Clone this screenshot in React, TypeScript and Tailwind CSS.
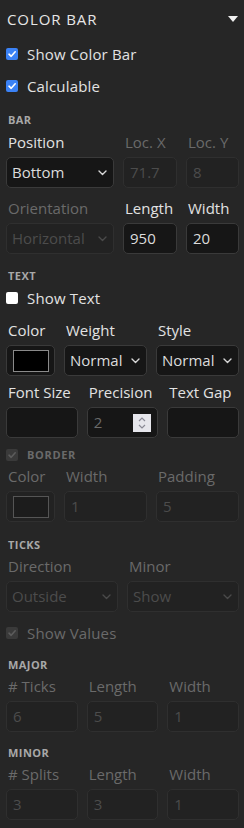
import React from 'react';

const font = { fontFamily: '"Open Sans", "Noto Sans", sans-serif' };

function Check({ state }: { state: 'on' | 'off' | 'disabled' }) {
  if (state === 'off') {
    return <span className="ml-[6px] mr-[9px] inline-block h-[12px] w-[12px] shrink-0 rounded-[2px] bg-white" />;
  }
  const on = state === 'on';
  return (
    <span
      className={`ml-[6px] mr-[9px] flex h-[12px] w-[12px] shrink-0 items-center justify-center rounded-[2px] ${on ? 'bg-[#3b82f6]' : 'bg-[#3a3a3a]'}`}
    >
      <svg width="10" height="10" viewBox="0 0 10 10">
        <path d="M2 5.2 L4.2 7.3 L8.2 2.8" fill="none" stroke={on ? '#ffffff' : '#5c5c5c'} strokeWidth="1.6" strokeLinecap="round" strokeLinejoin="round" />
      </svg>
    </span>
  );
}

function CheckRow({ label, state, h = 'h-[32px]', extra = '' }: { label: string; state: 'on' | 'off' | 'disabled'; h?: string; extra?: string }) {
  return (
    <div className={`flex items-center ${h} ${extra}`}>
      <Check state={state} />
      <span className={`text-[15px] tracking-[0.01em] ${state === 'disabled' ? 'text-[#6a6a6a]' : 'text-[#e2e2e2]'}`}>{label}</span>
    </div>
  );
}

function Section({ label, extra = '' }: { label: string; extra?: string }) {
  return (
    <div className={`flex h-[20px] items-center pl-[8px] text-[11px] font-bold tracking-[0.04em] text-[#a8a8a8] ${extra}`}>{label}</div>
  );
}

function Chevron({ dim }: { dim?: boolean }) {
  return (
    <svg width="9" height="6" viewBox="0 0 9 6" className="shrink-0">
      <path d="M1 1 L4.5 4.5 L8 1" fill="none" stroke={dim ? '#4a4a4a' : '#d8d8d8'} strokeWidth="1.4" strokeLinecap="round" strokeLinejoin="round" />
    </svg>
  );
}

type FieldProps = {
  label: string;
  dim?: boolean;
  kind: 'input' | 'select' | 'color' | 'spin';
  value?: string;
  swatch?: string;
};

function Field({ label, dim, kind, value = '', swatch }: FieldProps) {
  const box = dim
    ? 'bg-[#222222] border-[#2f2f2f] text-[#4c4c4c]'
    : 'bg-[#161616] border-[#3a3a3a] text-[#dcdcdc]';
  return (
    <div className="flex min-w-0 flex-col">
      <div className={`h-[22px] whitespace-nowrap pl-[2px] text-[15px] leading-[22px] ${dim ? 'text-[#6a6a6a]' : 'text-[#e2e2e2]'}`}>{label}</div>
      <div className={`mt-[4px] flex h-[31px] items-center rounded-[5px] border text-[15px] ${box}`}>
        {kind === 'input' && <span className="pl-[6px]">{value}</span>}
        {kind === 'select' && (
          <>
            <span className="flex-1 truncate pl-[5px]">{value}</span>
            <span className="pr-[6px]"><Chevron dim={dim} /></span>
          </>
        )}
        {kind === 'color' && (
          <span className="ml-[6px] h-[22px] w-[36px] border" style={{ background: swatch, borderColor: dim ? '#555555' : '#8a8a8a' }} />
        )}
        {kind === 'spin' && (
          <>
            <span className="flex-1 pl-[6px] text-[#6a6a6a]">{value}</span>
            <span className="mr-[6px] flex h-[18px] w-[18px] flex-col items-center justify-center gap-[2px] bg-[#e6e6ec]">
              <svg width="8" height="5" viewBox="0 0 8 5"><path d="M1 4 L4 1 L7 4" fill="none" stroke="#8a8a96" strokeWidth="1.2" /></svg>
              <svg width="8" height="5" viewBox="0 0 8 5"><path d="M1 1 L4 4 L7 1" fill="none" stroke="#8a8a96" strokeWidth="1.2" /></svg>
            </span>
          </>
        )}
      </div>
    </div>
  );
}

export default function App() {
  return (
    <div className="h-[828px] w-[244px] overflow-hidden bg-[#262626] pr-[5px]" style={font}>
      {/* Header */}
      <div className="flex h-[38px] items-center justify-between pl-[7px] pr-[1px]">
        <span className="text-[15px] font-medium tracking-[0.06em] text-[#e6e6e6]">COLOR BAR</span>
        <svg width="10" height="6" viewBox="0 0 10 6"><path d="M0 0 L10 0 L5 6 Z" fill="#f0f0f0" /></svg>
      </div>
      <CheckRow label="Show Color Bar" state="on" />
      <CheckRow label="Calculable" state="on" />

      <Section label="BAR" extra="mt-[8px]" />
      <div className="ml-[6px] mt-[1px] grid grid-cols-[108px_54px_1fr] gap-x-[9px]">
        <Field label="Position" kind="select" value="Bottom" />
        <Field label="Loc. X" kind="input" value="71.7" dim />
        <Field label="Loc. Y" kind="input" value="8" dim />
      </div>
      <div className="ml-[6px] mt-[9px] grid grid-cols-[108px_54px_1fr] gap-x-[9px]">
        <Field label="Orientation" kind="select" value="Horizontal" dim />
        <Field label="Length" kind="input" value="950" />
        <Field label="Width" kind="input" value="20" />
      </div>

      <Section label="TEXT" extra="mt-[12px]" />
      <CheckRow label="Show Text" state="off" h="h-[20px]" extra="mt-[2px]" />
      <div className="ml-[6px] mt-[11px] grid grid-cols-[49px_1fr_1fr] gap-x-[9px]">
        <Field label="Color" kind="color" swatch="#000000" />
        <Field label="Weight" kind="select" value="Normal" />
        <Field label="Style" kind="select" value="Normal" />
      </div>
      <div className="ml-[6px] mt-[5px] grid grid-cols-3 gap-x-[9px]">
        <Field label="Font Size" kind="input" />
        <Field label="Precision" kind="spin" value="2" />
        <Field label="Text Gap" kind="input" />
      </div>

      <div className="mt-[7px] flex h-[20px] items-center">
        <Check state="disabled" />
        <span className="text-[11px] font-bold tracking-[0.06em] text-[#6a6a6a]">BORDER</span>
      </div>
      <div className="ml-[6px] grid grid-cols-[49px_1fr_1fr] gap-x-[9px]">
        <Field label="Color" kind="color" swatch="#1c1c1c" dim />
        <Field label="Width" kind="input" value="1" dim />
        <Field label="Padding" kind="input" value="5" dim />
      </div>

      <Section label="TICKS" extra="mt-[13px]" />
      <div className="ml-[6px] grid grid-cols-2 gap-x-[9px]">
        <Field label="Direction" kind="select" value="Outside" dim />
        <Field label="Minor" kind="select" value="Show" dim />
      </div>
      <CheckRow label="Show Values" state="disabled" h="h-[20px]" extra="mt-[11px]" />

      <Section label="MAJOR" extra="mt-[12px]" />
      <div className="ml-[6px] grid grid-cols-3 gap-x-[9px]">
        <Field label="# Ticks" kind="input" value="6" dim />
        <Field label="Length" kind="input" value="5" dim />
        <Field label="Width" kind="input" value="1" dim />
      </div>

      <Section label="MINOR" extra="mt-[11px]" />
      <div className="ml-[6px] grid grid-cols-3 gap-x-[9px]">
        <Field label="# Splits" kind="input" value="3" dim />
        <Field label="Length" kind="input" value="3" dim />
        <Field label="Width" kind="input" value="1" dim />
      </div>
    </div>
  );
}
